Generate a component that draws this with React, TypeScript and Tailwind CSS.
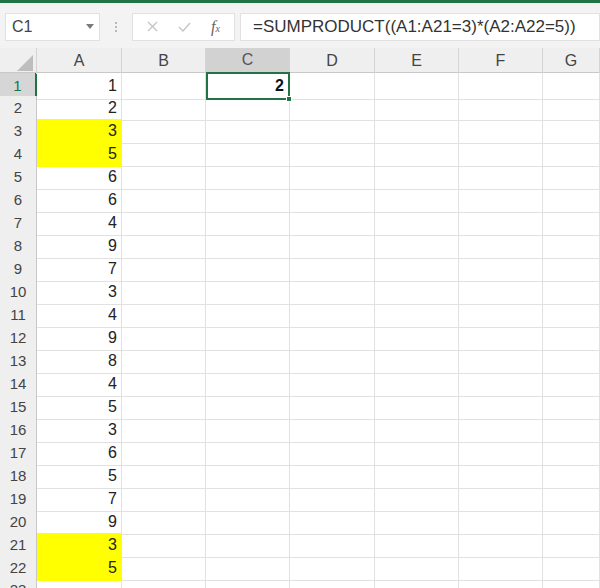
import React from 'react'

const colA = [1, 2, 3, 5, 6, 6, 4, 9, 7, 3, 4, 9, 8, 4, 5, 3, 6, 5, 7, 9, 3, 5]
const yellowRows = [3, 4, 21, 22]
const cols = ['A', 'B', 'C', 'D', 'E', 'F', 'G']
const grid = 'grid grid-cols-[37px_85px_84px_84px_85px_84px_84px_1fr]'
const font = { fontFamily: '"Liberation Sans", Arial, sans-serif' }

export default function App() {
  return (
    <div className="w-[600px] h-[588px] overflow-hidden bg-white" style={font}>
      {/* barra verde superior */}
      <div className="h-[3px] bg-[#217346]" />

      {/* barra de fórmulas */}
      <div className="h-[45px] bg-[#f3f3f3] flex items-center pl-[5px] pt-[2px]">
        <div className="w-[95px] h-[28px] bg-white border border-[#e1e1e1] flex items-center pl-[6px] pr-[5px] justify-between">
          <span className="text-[16px] text-[#444]">C1</span>
          <svg width="8" height="5" viewBox="0 0 8 5"><path d="M0 0h8L4 5z" fill="#7a7a7a" /></svg>
        </div>
        <div className="w-[32px] flex flex-col items-center gap-[2px]">
          <span className="w-[2px] h-[2px] bg-[#b8b8b8]" />
          <span className="w-[2px] h-[2px] bg-[#b8b8b8]" />
          <span className="w-[2px] h-[2px] bg-[#b8b8b8]" />
        </div>
        <div className="w-[103px] h-[28px] bg-white border border-[#e1e1e1] flex items-center justify-around px-[4px]">
          <svg width="11" height="11" viewBox="0 0 11 11"><path d="M1 1l9 9M10 1l-9 9" stroke="#c4c4c4" strokeWidth="1.3" /></svg>
          <svg width="13" height="10" viewBox="0 0 13 10"><path d="M1 5l4 4 7-8" stroke="#c4c4c4" strokeWidth="1.3" fill="none" /></svg>
          <span className="text-[16px] italic text-[#666] leading-none" style={{ fontFamily: '"Liberation Serif", serif' }}>f<span className="text-[10px]">x</span></span>
        </div>
        <div className="ml-[5px] flex-1 h-[28px] bg-white border border-[#e1e1e1] flex items-center pl-[12px]">
          <span className="text-[17px] text-[#333] whitespace-nowrap">=SUMPRODUCT((A1:A21=3)*(A2:A22=5))</span>
        </div>
      </div>

      {/* encabezados de columna */}
      <div className={`${grid} h-[25px] bg-[#efefef] border-b border-[#c8c8c8]`}>
        <div className="relative border-r border-[#d4d4d4]">
          <svg className="absolute right-[3px] bottom-[3px]" width="16" height="16" viewBox="0 0 16 16"><path d="M16 0v16H0z" fill="#bdbdbd" /></svg>
        </div>
        {cols.map((c) => (
          <div
            key={c}
            className={`flex items-center justify-center text-[16px] border-r border-[#d4d4d4] ${
              c === 'C' ? 'bg-[#d2d2d2] text-[#555] border-b-2 border-b-[#217346]' : 'text-[#444]'
            }`}
          >
            {c}
          </div>
        ))}
        <div />
      </div>

      {/* filas */}
      {Array.from({ length: 23 }, (_, i) => i + 1).map((r) => {
        const val = colA[r - 1]
        return (
          <div key={r} className={`${grid} h-[23px]`}>
            <div
              className={`flex items-center justify-center text-[15px] border-b border-[#dadada] ${
                r === 1
                  ? 'bg-[#d6d6d6] text-[#217346] border-r-2 border-r-[#217346]'
                  : 'bg-[#efefef] text-[#444] border-r border-r-[#c8c8c8]'
              }`}
            >
              {r}
            </div>
            <div
              className={`flex items-center justify-end pr-[4px] text-[16px] text-[#222] border-b border-r ${
                yellowRows.includes(r) ? 'bg-[#ffff00] border-[#ffff00]' : 'border-[#e1e1e1]'
              }`}
            >
              {val}
            </div>
            <div className="border-b border-r border-[#e1e1e1]" />
            <div
              className={
                r === 1
                  ? 'relative flex items-center justify-end pr-[4px] text-[16px] font-bold text-[#111] border-2 border-[#217346] -mt-[1px]'
                  : 'border-b border-r border-[#e1e1e1]'
              }
            >
              {r === 1 && (
                <>
                  2
                  <span className="absolute -right-[4px] -bottom-[4px] w-[6px] h-[6px] bg-[#217346] border border-white" />
                </>
              )}
            </div>
            <div className="border-b border-r border-[#e1e1e1]" />
            <div className="border-b border-r border-[#e1e1e1]" />
            <div className="border-b border-r border-[#e1e1e1]" />
            <div className="border-b border-r border-[#e1e1e1]" />
            <div className="border-b border-[#e1e1e1]" />
          </div>
        )
      })}
    </div>
  )
}
